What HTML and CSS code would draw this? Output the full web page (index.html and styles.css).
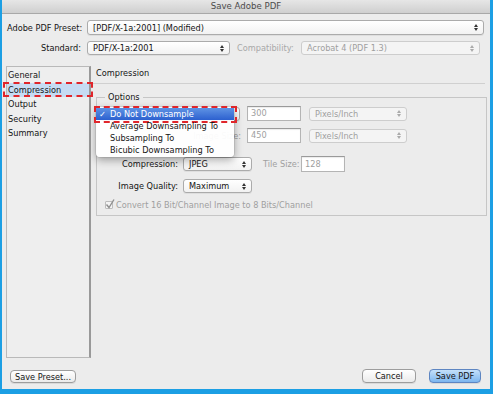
FILE: index.html
```html
<!DOCTYPE html>
<html>
<head>
<meta charset="utf-8">
<title>Save Adobe PDF</title>
<link rel="stylesheet" href="styles.css">
</head>
<body>
<div class="window">
  <div class="titlebar">Save Adobe PDF</div>
  <div class="form">
    <div class="row row1">
      <span class="lbl">Adobe PDF Preset:</span>
      <div class="select preset"><span>[PDF/X-1a:2001] (Modified)</span><svg class="arr" width="4" height="7" viewBox="0 0 4 7"><path d="M0 3L2 0L4 3Z M0 4L2 7L4 4Z"/></svg></div>
    </div>
    <div class="row row2">
      <span class="lbl">Standard:</span>
      <div class="select standard"><span>PDF/X-1a:2001</span><svg class="arr" width="4" height="7" viewBox="0 0 4 7"><path d="M0 3L2 0L4 3Z M0 4L2 7L4 4Z"/></svg></div>
      <span class="compat-lbl">Compatibility:</span>
      <div class="select compat disabled"><span>Acrobat 4 (PDF 1.3)</span><svg class="arr" width="4" height="7" viewBox="0 0 4 7"><path d="M0 3L2 0L4 3Z M0 4L2 7L4 4Z"/></svg></div>
    </div>
  </div>
  <div class="main">
    <ul class="sidebar">
      <li class="item">General</li>
      <li class="item selected">Compression</li>
      <li class="item">Output</li>
      <li class="item">Security</li>
      <li class="item">Summary</li>
    </ul>
    <div class="panel">
      <div class="panel-title">Compression</div>
      <div class="sep"></div>
      <fieldset class="options">
        <legend>Options</legend>
        <div class="orow r1">
          <div class="select ds"><span></span><svg class="arr" width="4" height="7" viewBox="0 0 4 7"><path d="M0 3L2 0L4 3Z M0 4L2 7L4 4Z"/></svg></div>
          <div class="input in1 disabled-text">300</div>
          <div class="select unit disabled"><span>Pixels/Inch</span><svg class="arr" width="4" height="7" viewBox="0 0 4 7"><path d="M0 3L2 0L4 3Z M0 4L2 7L4 4Z"/></svg></div>
          <div class="menu">
            <div class="mitem current"><span class="check">✓</span>Do Not Downsample</div>
            <div class="mitem">Average Downsampling To</div>
            <div class="mitem">Subsampling To</div>
            <div class="mitem">Bicubic Downsampling To</div>
          </div>
        </div>
        <div class="orow r2">
          <span class="olbl wide disabled-text">Image Size:</span>
          <div class="input in2 disabled-text">450</div>
          <div class="select unit disabled"><span>Pixels/Inch</span><svg class="arr" width="4" height="7" viewBox="0 0 4 7"><path d="M0 3L2 0L4 3Z M0 4L2 7L4 4Z"/></svg></div>
        </div>
        <div class="orow r3">
          <span class="olbl">Compression:</span>
          <div class="select small"><span>JPEG</span><svg class="arr" width="4" height="7" viewBox="0 0 4 7"><path d="M0 3L2 0L4 3Z M0 4L2 7L4 4Z"/></svg></div>
          <span class="tile-lbl disabled-text">Tile Size:</span>
          <div class="input tile disabled-text">128</div>
        </div>
        <div class="orow r4">
          <span class="olbl">Image Quality:</span>
          <div class="select small"><span>Maximum</span><svg class="arr" width="4" height="7" viewBox="0 0 4 7"><path d="M0 3L2 0L4 3Z M0 4L2 7L4 4Z"/></svg></div>
        </div>
        <div class="orow r5">
          <span class="checkbox"><svg width="10" height="10" viewBox="0 0 10 10"><path d="M1.5 5.5L4 8.5L9 0.5" fill="none" stroke="#8f8f8f" stroke-width="1.4"/></svg></span>
          <span class="disabled-text">Convert 16 Bit/Channel Image to 8 Bits/Channel</span>
        </div>
      </fieldset>
    </div>
  </div>
  <div class="buttons">
    <button class="btn preset-btn">Save Preset...</button>
    <span class="spacer"></span>
    <button class="btn cancel">Cancel</button>
    <button class="btn default">Save PDF</button>
  </div>
</div>
</body>
</html>
```

FILE: styles.css
```css
* { box-sizing: border-box; }
html, body { margin: 0; }
body {
  width: 493px;
  height: 394px;
  background: #1c9fe4;
  padding: 0 3px 5px 2px;
  overflow: hidden;
  font-family: "DejaVu Sans", sans-serif;
  font-size: 8.2px;
  color: #151515;
}
.window {
  height: 389px;
  background: #ececec;
  display: flex;
  flex-direction: column;
}
.titlebar {
  height: 14px;
  border-bottom: 1px solid #a8a8a8;
  background: linear-gradient(#e6e6e6, #cfcfcf);
  text-align: center;
  font-size: 8.6px;
  line-height: 13px;
  color: #4b4b4b;
}
.form {
  padding: 6px 6px 0 5px;
  display: flex;
  flex-direction: column;
  gap: 6px;
}
.row { display: flex; align-items: center; }
.lbl {
  width: 74px;
  text-align: right;
  margin-right: 6px;
  white-space: nowrap;
}
.select {
  display: flex;
  align-items: center;
  justify-content: space-between;
  background: linear-gradient(#ffffff, #f2f2f2);
  border: 1px solid #ababab;
  border-radius: 3px;
  box-shadow: 0 1px 0 rgba(0, 0, 0, 0.06);
  padding: 0 5px;
  height: 14px;
  white-space: nowrap;
  line-height: 12px;
}
.select .arr { fill: #333; flex: none; }
.preset { flex: 1; height: 15px; }
.standard { width: 143px; }
.compat-lbl {
  margin-left: 7px;
  width: 64px;
  color: #a8a8a8;
  white-space: nowrap;
}
.compat { width: 179px; }
.select.disabled {
  color: #9f9f9f;
  border-color: #cdcdcd;
  background: #f4f4f4;
  box-shadow: none;
}
.select.disabled .arr { fill: #aaaaaa; }
.disabled-text { color: #a0a0a0; }

.main {
  display: flex;
  margin-top: 11px;
  padding: 0 3px 0 4px;
  gap: 2px;
  height: 292px;
}
.sidebar {
  width: 85px;
  margin: 0;
  padding: 1px 0 0 0;
  list-style: none;
  border: 1px solid #b9b9b9;
  border-right: 2px solid #999999;
  background: #eeeeee;
}
.item {
  height: 14.5px;
  line-height: 14.5px;
  padding-left: 1px;
  position: relative;
}
.item.selected { background: #c6dcf3; }
.item.selected::after {
  content: "";
  position: absolute;
  left: -4px;
  right: -4px;
  top: -1px;
  bottom: 0;
  border: 2px dashed #e0262b;
}
.panel {
  flex: 1;
  display: flex;
  flex-direction: column;
}
.panel-title {
  height: 14px;
  line-height: 14px;
  padding-left: 3px;
}
.sep {
  margin-top: 3px;
  margin-right: 2px;
  border-top: 1px solid #d0d0d0;
}
.options {
  margin: 8px 0 0 3px;
  border: 1px solid #c6c6c6;
  padding: 4px 0 5px 0;
  min-width: 0;
}
.options legend {
  margin-left: 8px;
  padding: 0 3px;
  line-height: 10px;
  font-size: 8.2px;
}
.orow {
  display: flex;
  align-items: center;
  white-space: nowrap;
}
.r1 { height: 15px; position: relative; }
.r2 { height: 15px; margin-top: 7px; }
.r3 { height: 16px; margin-top: 13px; }
.r4 { height: 14px; margin-top: 7px; }
.r5 { height: 11px; margin-top: 6px; }
.ds { margin-left: 3px; width: 140px; }
.input {
  height: 15px;
  width: 54px;
  background: #fff;
  border: 1px solid #b4b4b4;
  border-top-color: #9a9a9a;
  box-shadow: inset 0 1px 1px rgba(0, 0, 0, 0.08);
  padding-left: 3px;
  line-height: 13px;
}
.in1 { margin-left: 7px; }
.in2 { margin-left: 6px; }
.unit { margin-left: 8px; width: 98px; }
.olbl {
  width: 81px;
  text-align: right;
}
.olbl.wide { width: 144px; }
.small { margin-left: 5px; width: 69px; }
.tile-lbl { margin-left: 11px; width: 35px; }
.tile { margin-left: 3px; width: 44px; height: 16px; line-height: 14px; }
.checkbox {
  margin-left: 8px;
  width: 8px;
  height: 8px;
  border: 1px solid #bdbdbd;
  border-radius: 1px;
  background: #f4f4f4;
  position: relative;
  margin-right: 3px;
}
.checkbox svg { position: absolute; left: -1px; top: -3px; }

.menu {
  position: absolute;
  left: -1px;
  top: 1px;
  width: 138px;
  background: rgba(255, 255, 255, 0.94);
  border-radius: 0 0 4px 4px;
  box-shadow: 0 3px 8px rgba(0, 0, 0, 0.35), 0 0 0 1px rgba(0, 0, 0, 0.07);
  padding: 1px 0;
  z-index: 5;
}
.mitem {
  height: 12px;
  line-height: 12px;
  padding-left: 14px;
  position: relative;
}
.mitem.current {
  background: linear-gradient(#5f93e4, #2c60cf);
  color: #fff;
}
.mitem.current::after {
  content: "";
  position: absolute;
  left: -2px;
  right: -3px;
  top: -2px;
  bottom: -3px;
  border: 2px dashed #e0262b;
}
.check {
  position: absolute;
  left: 3px;
  top: 0;
}

.buttons {
  display: flex;
  align-items: center;
  margin-top: 11px;
  padding: 0 9px 0 8px;
  height: 14px;
}
.spacer { flex: 1; }
.btn {
  font-family: "DejaVu Sans", sans-serif;
  font-size: 8.2px;
  color: #151515;
  background: linear-gradient(#ffffff, #ebebeb);
  border: 1px solid #9d9d9d;
  border-radius: 4px;
  box-shadow: 0 1px 0 rgba(0, 0, 0, 0.08);
  padding: 0;
  height: 14px;
  line-height: 12px;
  text-align: center;
}
.preset-btn { width: 66px; height: 13px; margin-top: 1px; }
.cancel { width: 54px; }
.default {
  width: 52px;
  margin-left: 13px;
  background: linear-gradient(#c4e0fa, #7db6ef);
  border-color: #5e86c2;
}
```
